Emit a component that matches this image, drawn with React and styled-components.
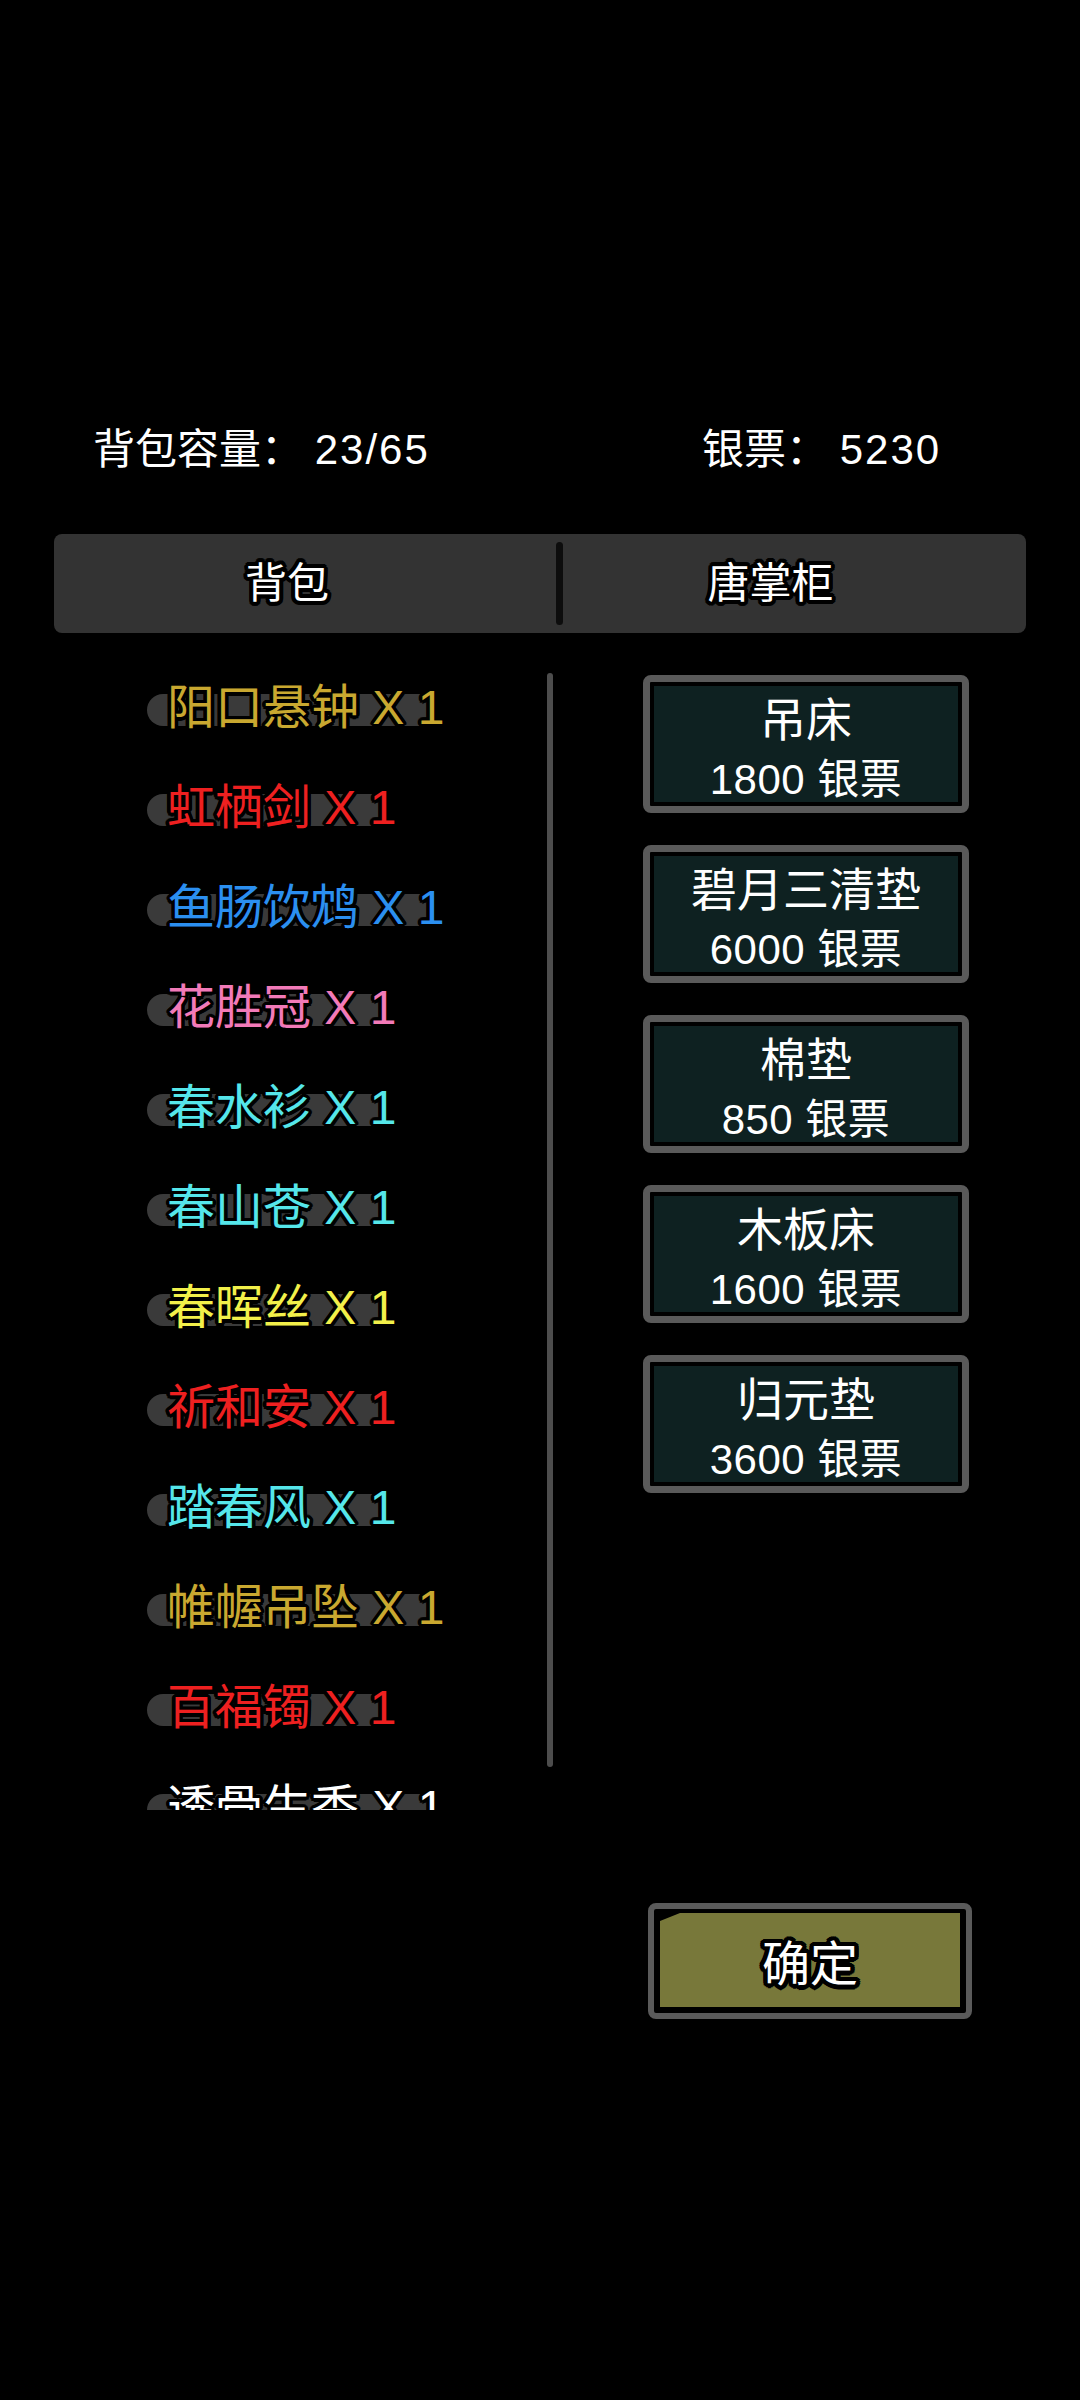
import React from "react";
import styled, { createGlobalStyle } from "styled-components";

const FONT = `"Liberation Sans", "Noto Sans CJK SC", sans-serif`;

// black rim around game text, built from offset shadows
const outline = (r, color = "#000") => {
  const out = [];
  for (let i = 0; i < 16; i++) {
    const a = (i / 16) * Math.PI * 2;
    out.push(`${(Math.cos(a) * r).toFixed(1)}px ${(Math.sin(a) * r).toFixed(1)}px 0 ${color}`);
  }
  return out.join(", ");
};

const GlobalStyle = createGlobalStyle`
  html, body {
    margin: 0;
    padding: 0;
    background: #000;
  }
  * {
    box-sizing: border-box;
  }
`;

const Page = styled.div`
  width: 1080px;
  min-height: 2400px;
  padding-top: 420px;
  background: #000;
  font-family: ${FONT};
  color: #fff;
`;

const Header = styled.div`
  display: grid;
  grid-template-columns: 609px auto;
  padding-left: 93px;
  height: 60px;
  line-height: 60px;
  font-size: 42px;
  white-space: pre;
`;

const HeaderValue = styled.span`
  letter-spacing: 2px;
`;

const TabBar = styled.div`
  display: flex;
  align-items: center;
  margin: 54px 54px 0;
  height: 99px;
  background: #333333;
  border-radius: 8px;
`;

const Tab = styled.div`
  flex: ${(p) => p.$grow};
  text-align: center;
  padding-right: ${(p) => p.$shift}px;
  font-size: 42px;
  line-height: 99px;
  text-shadow: ${outline(4)};
`;

const TabDivider = styled.div`
  width: 7px;
  height: 83px;
  border-radius: 4px;
  background: #0d0d0d;
`;

const Body = styled.div`
  display: flex;
  margin-top: 25px;
  height: 1152px;
`;

const ItemList = styled.div`
  width: 547px;
  height: 1152px;
  overflow: hidden;
  padding-left: 167px;
`;

const ItemRow = styled.div`
  height: 100px;
  display: flex;
  align-items: center;
`;

const ItemName = styled.span`
  position: relative;
  isolation: isolate;
  font-size: 48px;
  line-height: 60px;
  white-space: pre;
  color: ${(p) => p.$color};
  text-shadow: ${outline(3.5)};

  &::before {
    content: "";
    position: absolute;
    z-index: -1;
    left: -20px;
    right: 8px;
    top: 16px;
    height: 32px;
    border-radius: 16px;
    background: #3a3a3a;
  }
`;

const ScrollBar = styled.div`
  width: 6px;
  height: 1094px;
  margin-top: 15px;
  border-radius: 3px;
  background: #4d4d4d;
`;

const ShopColumn = styled.div`
  display: flex;
  flex-direction: column;
  gap: 32px;
  margin-left: 90px;
  margin-top: 17px;
`;

const ShopCard = styled.div`
  width: 326px;
  height: 138px;
  border: 7px solid #5a5a5a;
  border-radius: 8px;
  background: #000;
  padding: 4px;
`;

const ShopFill = styled.div`
  height: 116px;
  padding-top: 4px;
  background: #0e2121;
  text-align: center;
`;

const ShopTitle = styled.div`
  font-size: 46px;
  line-height: 60px;
`;

const ShopPrice = styled.div`
  font-size: 42px;
  line-height: 60px;
  white-space: pre;
  letter-spacing: 0.5px;
`;

const Footer = styled.div`
  margin-top: 93px;
  padding-left: 648px;
`;

const ConfirmButton = styled.div`
  width: 324px;
  height: 116px;
  border: 6px solid #5a5a5a;
  border-radius: 8px;
  background: #000;
  padding: 4px 6px 6px 6px;
`;

const ConfirmFill = styled.div`
  height: 100%;
  background: #78783a;
  clip-path: polygon(20px 0, 100% 0, 100% 100%, 0 100%, 0 8px);
  display: flex;
  align-items: center;
  justify-content: center;
  font-size: 48px;
  text-shadow: ${outline(4.5)};
`;

const items = [
  { name: "阳口悬钟", color: "#c9a830" },
  { name: "虹栖剑", color: "#ee2020" },
  { name: "鱼肠饮鸩", color: "#2b8ff0" },
  { name: "花胜冠", color: "#f27ab8" },
  { name: "春水衫", color: "#55e6ea" },
  { name: "春山苍", color: "#55e6ea" },
  { name: "春晖丝", color: "#f2f04a" },
  { name: "祈和安", color: "#ee2020" },
  { name: "踏春风", color: "#55e6ea" },
  { name: "帷幄吊坠", color: "#c9a830" },
  { name: "百福镯", color: "#ee2020" },
  { name: "透骨生香", color: "#ffffff" },
];

const goods = [
  { name: "吊床", price: 1800 },
  { name: "碧月三清垫", price: 6000 },
  { name: "棉垫", price: 850 },
  { name: "木板床", price: 1600 },
  { name: "归元垫", price: 3600 },
];

export default function App() {
  return (
    <Page>
      <GlobalStyle />
      <Header>
        <span>
          背包容量： <HeaderValue>23/65</HeaderValue>
        </span>
        <span>
          银票： <HeaderValue>5230</HeaderValue>
        </span>
      </Header>

      <TabBar>
        <Tab $grow="0 0 502px" $shift={36}>背包</Tab>
        <TabDivider />
        <Tab $grow="1" $shift={48}>唐掌柜</Tab>
      </TabBar>

      <Body>
        <ItemList>
          {items.map((it) => (
            <ItemRow key={it.name}>
              <ItemName $color={it.color}>{`${it.name} X 1`}</ItemName>
            </ItemRow>
          ))}
        </ItemList>
        <ScrollBar />
        <ShopColumn>
          {goods.map((g) => (
            <ShopCard key={g.name}>
              <ShopFill>
                <ShopTitle>{g.name}</ShopTitle>
                <ShopPrice>{`${g.price} 银票`}</ShopPrice>
              </ShopFill>
            </ShopCard>
          ))}
        </ShopColumn>
      </Body>

      <Footer>
        <ConfirmButton>
          <ConfirmFill>确定</ConfirmFill>
        </ConfirmButton>
      </Footer>
    </Page>
  );
}
